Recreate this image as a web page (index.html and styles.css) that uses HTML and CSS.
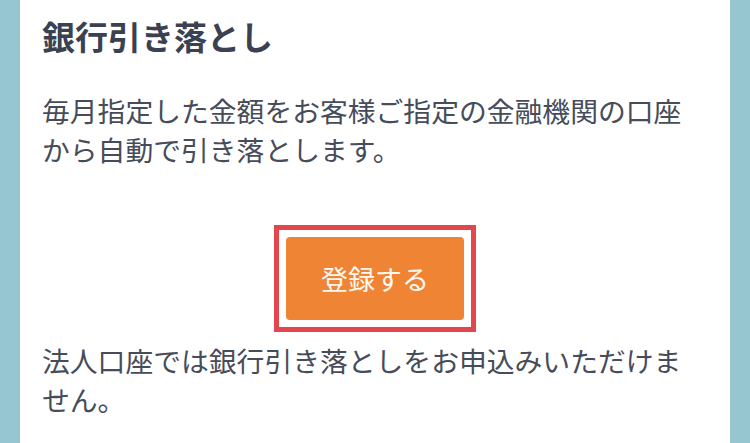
FILE: index.html
```html
<!DOCTYPE html>
<html lang="ja">
<head>
<meta charset="utf-8">
<title>銀行引き落とし</title>
<link rel="stylesheet" href="styles.css">
</head>
<body>
<main class="card">
  <h2 class="card-title">銀行引き落とし</h2>
  <p class="card-text">毎月指定した金額をお客様ご指定の金融機関の口座から自動で引き落とします。</p>
  <div class="cta">
    <div class="highlight">
      <a class="btn" href="#">登録する</a>
    </div>
  </div>
  <p class="card-text note">法人口座では銀行引き落としをお申込みいただけません。</p>
</main>
</body>
</html>
```

FILE: styles.css
```css
html, body {
  margin: 0;
  padding: 0;
}
body {
  background: #96c6cf;
  height: 443px;
  overflow: hidden;
  font-family: "Noto Sans CJK JP", "Noto Sans", sans-serif;
}
.card {
  margin: 0 20px;
  background: #ffffff;
  padding: 11px 30px 40px 22px;
  min-height: 443px;
  box-sizing: border-box;
}
.card-title {
  margin: 0;
  font-size: 33px;
  line-height: 50px;
  font-weight: 700;
  color: #3b4150;
}
.card-text {
  margin: 30px 0 0;
  font-size: 27.8px;
  line-height: 38.5px;
  color: #464c59;
}
.cta {
  display: flex;
  justify-content: center;
  margin-top: 57px;
  padding-left: 8px;
}
.highlight {
  border: 5px solid #e4464e;
  padding: 7px;
}
.btn {
  display: flex;
  align-items: center;
  justify-content: center;
  width: 178px;
  height: 83px;
  background: #ee8434;
  border-radius: 4px;
  color: #fff8ef;
  font-size: 27px;
  text-decoration: none;
}
.note {
  margin-top: 9px;
}
```
